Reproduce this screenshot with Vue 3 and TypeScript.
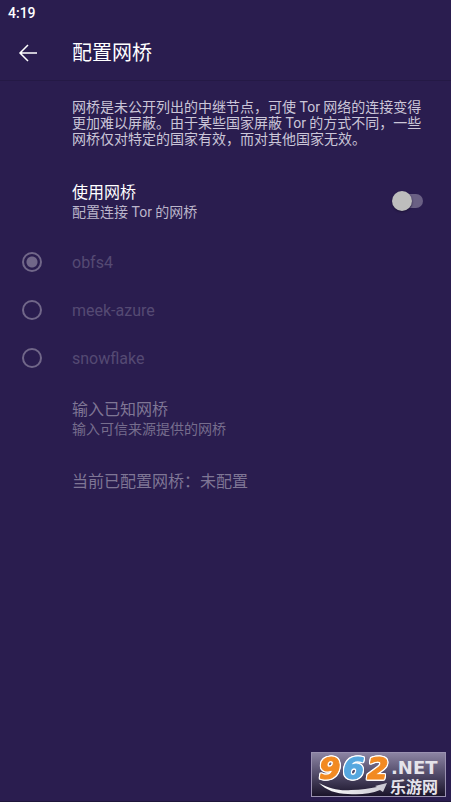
<script setup lang="ts">
import { ref } from 'vue'

const useBridges = ref(false)
const bridge = ref('obfs4')
const bridges: string[] = ['obfs4', 'meek-azure', 'snowflake']
</script>

<template>
  <div class="screen">
    <div class="status">4:19</div>
    <header class="bar">
      <button class="back" type="button" aria-label="返回">
        <svg width="20" height="18" viewBox="0 0 20 18" fill="none" stroke="currentColor" stroke-width="1.5">
          <path d="M19 9H2M10 1L2 9L10 17" />
        </svg>
      </button>
      <h1>配置网桥</h1>
    </header>
    <main>
      <p class="intro">网桥是未公开列出的中继节点，可使 Tor 网络的连接变得更加难以屏蔽。由于某些国家屏蔽 Tor 的方式不同，一些网桥仅对特定的国家有效，而对其他国家无效。</p>
      <label class="toggle" for="use-bridges">
        <span class="item">
          <span class="title">使用网桥</span>
          <span class="summary">配置连接 Tor 的网桥</span>
        </span>
        <input id="use-bridges" v-model="useBridges" class="switch" type="checkbox" role="switch" />
      </label>
      <fieldset class="bridges" :disabled="!useBridges">
        <label v-for="name in bridges" :key="name" class="choice">
          <input v-model="bridge" type="radio" name="bridge" :value="name" />
          <span>{{ name }}</span>
        </label>
        <button class="known item" type="button">
          <span class="title">输入已知网桥</span>
          <span class="summary">输入可信来源提供的网桥</span>
        </button>
      </fieldset>
      <p class="current">当前已配置网桥：未配置</p>
    </main>
    <a class="watermark" href="#">
      <svg width="135" height="45" viewBox="0 0 135 45">
        <defs>
          <linearGradient id="plate" x1="0" y1="0" x2="0" y2="1">
            <stop offset="0" stop-color="#8d85a4" />
            <stop offset="0.5" stop-color="#514a68" />
            <stop offset="1" stop-color="#191329" />
          </linearGradient>
          <linearGradient id="swoosh" x1="0" y1="0" x2="1" y2="0">
            <stop offset="0" stop-color="#ffffff" />
            <stop offset="1" stop-color="#c9c7d1" />
          </linearGradient>
        </defs>
        <rect x="0.5" y="0.5" width="134" height="44" fill="url(#plate)" stroke="#9a91b1" />
        <path d="M8 31C19 37 29 39 40 38C50 38 59 36 66 35L64 34L76 31L72 40L69 38C60 42 48 43 37 42C25 42 15 38 8 31Z" fill="url(#swoosh)" />
        <g class="digits">
          <text class="orange" x="8" y="27">9</text>
          <text class="blue" x="32" y="27">6</text>
          <text class="orange" x="56" y="27">2</text>
        </g>
        <text class="net" x="80" y="22">.NET</text>
        <text class="site" x="79" y="41">乐游网</text>
      </svg>
    </a>
  </div>
</template>

<style>
body {
  background: #2a1d4f;
}
</style>

<style scoped>
.screen {
  position: relative;
  box-sizing: border-box;
  min-height: 100vh;
  background: #2a1d4f;
  border-bottom: 1px solid #1f163b;
  color: #fff;
  font-family: Roboto, "Noto Sans CJK SC", sans-serif;
  font-size: 16px;
}

.status {
  height: 24px;
  padding-left: 8px;
  font-size: 14px;
  font-weight: 500;
  line-height: 26px;
  box-sizing: border-box;
}

.bar {
  display: flex;
  align-items: center;
  box-sizing: border-box;
  height: 57px;
  padding-top: 2px;
  border-bottom: 1px solid #241945;
}

.back {
  display: flex;
  align-items: center;
  width: 72px;
  height: 48px;
  padding: 0 0 0 18px;
  border: 0;
  background: none;
  color: #fff;
}

h1 {
  margin: 0;
  font-size: 20px;
  font-weight: 400;
  line-height: 24px;
}

.intro {
  margin: 0;
  padding: 18px 24px 0 72px;
  color: #cbc6d8;
  font-size: 14px;
  line-height: 16px;
}

.toggle {
  display: flex;
  align-items: flex-start;
  justify-content: space-between;
  padding: 36px 28px 0 72px;
}

.item {
  display: flex;
  flex-direction: column;
}

.title {
  font-size: 16px;
  line-height: 20px;
}

.summary {
  color: #bbb5ca;
  font-size: 14px;
  line-height: 18px;
}

.known .title {
  line-height: 21px;
}

.switch {
  position: relative;
  appearance: none;
  width: 30px;
  height: 14px;
  margin: 11px 0 0;
  border-radius: 7px;
  background: #6a6084;
}

.switch::before {
  content: "";
  position: absolute;
  top: -3px;
  left: -1px;
  width: 20px;
  height: 20px;
  border-radius: 50%;
  background: #bdbdbd;
  box-shadow: 0 1px 2px #1b1236;
}

.switch:checked::before {
  left: 11px;
}

.bridges {
  margin: 0;
  padding: 17px 0 0;
  border: 0;
}

.choice {
  display: flex;
  align-items: center;
  height: 48px;
  padding-left: 22px;
  color: #554a73;
}

.choice input {
  appearance: none;
  box-sizing: border-box;
  width: 20px;
  height: 20px;
  margin: 0 30px 0 0;
  border: 2px solid #716789;
  border-radius: 50%;
}

.choice input:checked {
  background: radial-gradient(circle, #716789 5px, transparent 6px);
}

.known {
  margin-top: 17px;
  padding: 0 0 0 72px;
  border: 0;
  background: none;
  color: #7f7695;
  font-family: inherit;
  text-align: left;
}

.known .summary {
  color: #766d8d;
}

.current {
  margin: 0;
  padding: 34px 24px 0 72px;
  color: #7f7695;
  line-height: 20px;
}

.watermark {
  position: absolute;
  right: 5px;
  bottom: 4px;
}

.watermark svg {
  display: block;
  overflow: visible;
}

.digits {
  font: italic 700 31px "DejaVu Sans", sans-serif;
  stroke-width: 1px;
  stroke-linejoin: round;
  filter: drop-shadow(1px 0 #fff) drop-shadow(-1px 0 #fff) drop-shadow(0 1px #fff) drop-shadow(0 -1px #fff);
}

.orange {
  fill: #f28a22;
  stroke: #f28a22;
}

.blue {
  fill: #55a7df;
  stroke: #55a7df;
}

.net {
  fill: #e5e3ea;
  font: 700 18px "DejaVu Sans", sans-serif;
}

.site {
  fill: #e5e3ea;
  font: 700 16px "Noto Sans CJK SC", sans-serif;
}
</style>
